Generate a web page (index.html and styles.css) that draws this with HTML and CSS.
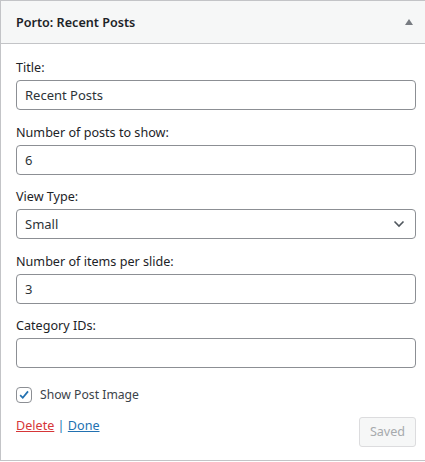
FILE: index.html
```
<!DOCTYPE html>
<html>
<head>
<meta charset="utf-8">
<link rel="stylesheet" href="styles.css">
</head>
<body>
<div class="widget">
  <div class="widget-top">
    <h3 class="widget-title">Porto: Recent Posts</h3>
    <span class="toggle"></span>
  </div>
  <div class="widget-inside">
    <div class="field">
      <label class="lbl">Title:</label>
      <input class="inp" type="text" value="Recent Posts">
    </div>
    <div class="field">
      <label class="lbl">Number of posts to show:</label>
      <input class="inp" type="text" value="6">
    </div>
    <div class="field">
      <label class="lbl">View Type:</label>
      <div class="sel">
        <span>Small</span>
        <svg class="chev" width="12" height="8" viewBox="0 0 12 8"><path d="M1.5 1.5 L6 6 L10.5 1.5" fill="none" stroke="#50575e" stroke-width="1.6"/></svg>
      </div>
    </div>
    <div class="field">
      <label class="lbl">Number of items per slide:</label>
      <input class="inp" type="text" value="3">
    </div>
    <div class="field">
      <label class="lbl">Category IDs:</label>
      <input class="inp" type="text" value="">
    </div>
    <div class="check-row">
      <span class="cb"><svg width="16" height="16" viewBox="0 0 16 16"><path d="M3.6 8.2 L6.6 11.2 L12.6 3.8" fill="none" stroke="#2271b1" stroke-width="2"/></svg></span>
      <span class="cb-label">Show Post Image</span>
    </div>
    <div class="actions">
      <div class="links"><a class="del" href="#">Delete</a> <span class="sep">|</span> <a class="done" href="#">Done</a></div>
      <button class="saved">Saved</button>
    </div>
  </div>
</div>
</body>
</html>
```
FILE: styles.css
```
html, body {
  margin: 0;
  padding: 0;
  background: #fff;
  overflow: hidden;
}
body {
  font-family: "Noto Sans", "Open Sans", "Liberation Sans", sans-serif;
  font-size: 12.6px;
  color: #1d2327;
}
.widget {
  width: 425px;
  height: 461px;
  box-sizing: border-box;
  border-left: 1px solid #c3c4c7;
  border-top: 1px solid #c3c4c7;
  border-bottom: 1px solid #c3c4c7;
  background: #fff;
}
.widget-top {
  height: 42px;
  background: #f6f7f7;
  border-bottom: 1px solid #c3c4c7;
  display: flex;
  align-items: center;
  justify-content: space-between;
  padding: 0 12px 0 15px;
}
.widget-title {
  margin: 0;
  font-size: 12.6px;
  font-weight: 600;
  color: #1d2327;
}
.toggle {
  width: 0;
  height: 0;
  border-left: 4px solid transparent;
  border-right: 4px solid transparent;
  border-bottom: 6px solid #787c82;
  margin-top: -1px;
}
.widget-inside {
  padding: 15px 9px 0 15px;
}
.field {
  display: flex;
  flex-direction: column;
  margin-bottom: 13.5px;
}
.lbl {
  display: block;
  line-height: 18px;
  height: 18px;
  margin-bottom: 3px;
  color: #1d2327;
}
.inp, .sel {
  box-sizing: border-box;
  width: 400px;
  height: 30px;
  border: 1px solid #8c8f94;
  border-radius: 4px;
  padding: 0 8px;
  font-family: inherit;
  font-size: 13px;
  color: #2c3338;
  background: #fff;
  margin: 0;
  outline: none;
}
.sel {
  display: flex;
  align-items: center;
  justify-content: space-between;
  padding: 0 10px 0 8px;
}
.check-row {
  display: flex;
  align-items: center;
  margin-top: 18.5px;
  height: 16px;
}
.cb {
  box-sizing: border-box;
  width: 16px;
  height: 16px;
  border: 1px solid #8c8f94;
  border-radius: 4px;
  display: flex;
  align-items: center;
  justify-content: center;
  margin-right: 8px;
}
.cb svg {
  display: block;
}
.cb-label {
  color: #3c434a;
  font-size: 12.2px;
}
.actions {
  display: flex;
  justify-content: space-between;
  align-items: flex-start;
  margin-top: 13px;
}
.links {
  line-height: 20px;
  padding-top: 0;
  font-size: 12.6px;
  color: #2271b1;
}
.del {
  color: #d63638;
  text-decoration: underline;
}
.done {
  color: #2271b1;
  text-decoration: underline;
}
.sep {
  color: #2271b1;
}
.saved {
  box-sizing: border-box;
  width: 57px;
  height: 30px;
  margin-top: 1px;
  background: #f6f7f7;
  border: 1px solid #dcdcde;
  border-radius: 3px;
  color: #a7aaad;
  font-family: inherit;
  font-size: 12.6px;
  padding: 0;
}
```
